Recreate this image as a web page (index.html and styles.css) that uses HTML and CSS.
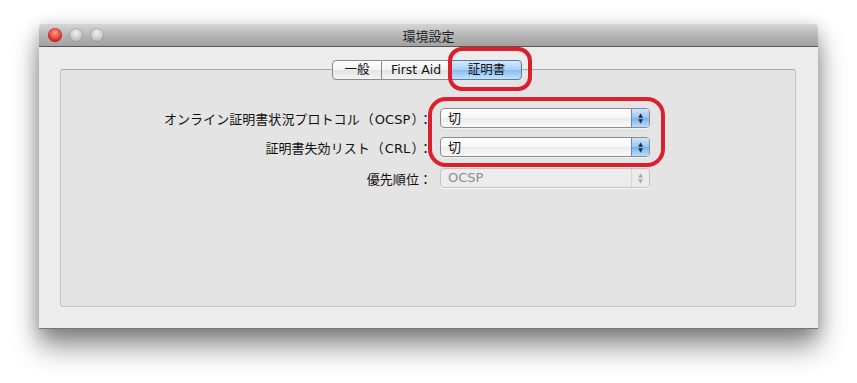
FILE: index.html
```html
<!DOCTYPE html>
<html lang="ja">
<head>
    <meta charset="UTF-8">
    <title>環境設定</title>
    <link rel="stylesheet" href="styles.css">
</head>
<body>
    <div class="window">
        <div class="titlebar">
            <div class="lights">
                <span class="light red"></span>
                <span class="light"></span>
                <span class="light"></span>
            </div>
            <div class="title">環境設定</div>
        </div>
        <div class="content">
            <div class="panel">
                <div class="tabs">
                    <span class="tab t1">一般</span>
                    <span class="tab t2">First Aid</span>
                    <span class="tab t3 on">証明書</span>
                </div>
                <div class="form">
                    <label>オンライン証明書状況プロトコル<span class="p">（</span>OCSP<span class="p">）</span>：</label>
                    <div class="popup"><span>切</span><i class="arrows"><b>▲</b><b>▼</b></i></div>
                    <label>証明書失効リスト<span class="p">（</span>CRL<span class="p">）</span>：</label>
                    <div class="popup"><span>切</span><i class="arrows"><b>▲</b><b>▼</b></i></div>
                    <label class="last">優先順位：</label>
                    <div class="popup off"><span>OCSP</span><i class="arrows"><b>▲</b><b>▼</b></i></div>
                </div>
            </div>
        </div>
    </div>

    <!-- 赤い注釈の枠 -->
    <div class="mark mark-tab"></div>
    <div class="mark mark-popups"></div>
</body>
</html>
```

FILE: styles.css
```css
html, body {
    margin: 0;
    padding: 0;
    background: #fff;
}

body {
    width: 857px;
    height: 383px;
    overflow: hidden;
    position: relative;
    padding: 24px 0 0 39px;
    box-sizing: border-box;
    font-family: "DejaVu Sans", "Noto Sans CJK JP", sans-serif;
    font-size: 13px;
    color: #111;
}

.window {
    width: 779px;
    height: 304px;
    background: #ececec;
    border-bottom: 1px solid #777;
    box-shadow: 0 18px 26px rgba(0, 0, 0, 0.42), 0 4px 16px rgba(0, 0, 0, 0.22);
    display: flex;
    flex-direction: column;
}

.titlebar {
    height: 22px;
    flex: none;
    background: linear-gradient(#d6d6d6, #b4b4b4 55%, #a2a2a2);
    border-bottom: 1px solid #555;
    border-radius: 4px 4px 0 0;
    display: flex;
    align-items: center;
    position: relative;
}

.lights {
    display: flex;
    gap: 7px;
    padding-left: 9px;
}

.light {
    width: 14px;
    height: 14px;
    border-radius: 50%;
    background: radial-gradient(circle at 50% 35%, #f0f0f0, #bdbdbd 70%, #a5a5a5);
    box-shadow: inset 0 0 0 1px rgba(0, 0, 0, 0.15);
}

.light.red {
    background: radial-gradient(circle at 50% 35%, #ff9d8f, #e0332a 60%, #a81a12);
}

.title {
    position: absolute;
    left: 0;
    right: 0;
    top: 2px;
    text-align: center;
    font-family: "Noto Sans CJK JP", sans-serif;
    font-size: 13px;
    color: #222;
}

.content {
    flex: 1;
    padding: 22px 22px 21px 21px;
    display: flex;
}

.panel {
    flex: 1;
    background: #e4e4e4;
    border: 1px solid #c2c2c2;
    border-top-color: #a9a9a9;
    border-radius: 3px;
    box-shadow: 0 1px 0 #f6f6f6;
}

.tabs {
    display: flex;
    justify-content: center;
    margin: -10px 0 0 -2px;
}

.tab {
    height: 18px;
    line-height: 17px;
    border: 1px solid #8a8a8a;
    background: linear-gradient(#ffffff, #f2f2f2 50%, #e3e3e3 51%, #f4f4f4);
    font-size: 12.5px;
    text-align: center;
    font-family: "DejaVu Sans", "Noto Sans CJK JP", sans-serif;
}

.t1 {
    width: 48px;
    border-radius: 4px 0 0 4px;
}

.t2 {
    width: 68px;
    border-left: none;
}

.t3 {
    width: 69px;
    border-left: none;
    border-radius: 0 4px 4px 0;
}

.tab.on {
    background: linear-gradient(#d6e9fb, #a7cff4 50%, #86bdf0 51%, #c4e2fb);
    border-color: #5a7aa8;
    border-left: 1px solid #5a7aa8;
}

.form {
    display: grid;
    grid-template-columns: 371px 210px;
    column-gap: 8px;
    row-gap: 9px;
    margin-top: 28px;
    align-items: center;
}

.form label {
    text-align: right;
    font-size: 13px;
    letter-spacing: 0.05px;
    white-space: nowrap;
}

.form label .p {
    font-family: "Noto Sans CJK JP", sans-serif;
    margin: 0 1px;
}

.form label.last {
    margin-top: 2px;
}

.popup {
    height: 18px;
    border: 1px solid #8c8c8c;
    border-radius: 4px;
    background: linear-gradient(#ffffff, #f7f7f7 50%, #ececec 51%, #f9f9f9);
    display: flex;
    align-items: center;
    box-shadow: 0 1px 0 rgba(255, 255, 255, 0.6);
}

.popup span {
    flex: 1;
    padding-left: 7px;
    font-family: "Noto Sans CJK JP", sans-serif;
    font-size: 13px;
    line-height: 18px;
}

.popup .arrows {
    width: 17px;
    height: 18px;
    border-left: 1px solid #6b88b3;
    border-radius: 0 3px 3px 0;
    background: linear-gradient(#cfe5fb, #97c5f1 50%, #7ab3ec 51%, #b9dcfb);
    display: flex;
    flex-direction: column;
    align-items: center;
    justify-content: center;
    font-style: normal;
}

.popup .arrows b {
    font-size: 6px;
    line-height: 6px;
    color: #1a2a44;
    font-weight: normal;
}

.popup.off {
    border-color: #c4c4c4;
    background: #ececec;
    margin-top: 2px;
}

.popup.off span {
    color: #8e8e8e;
    font-family: "DejaVu Sans", sans-serif;
}

.popup.off .arrows {
    background: none;
    border-left-color: #d4d4d4;
}

.popup.off .arrows b {
    color: #aaa;
}

.mark {
    position: absolute;
    border: 4px solid #dc1f2c;
    border-radius: 14px;
}

.mark-tab {
    left: 448px;
    top: 47px;
    width: 76px;
    height: 36px;
}

.mark-popups {
    left: 428px;
    top: 97px;
    width: 229px;
    height: 62px;
    border-radius: 18px;
}
```
